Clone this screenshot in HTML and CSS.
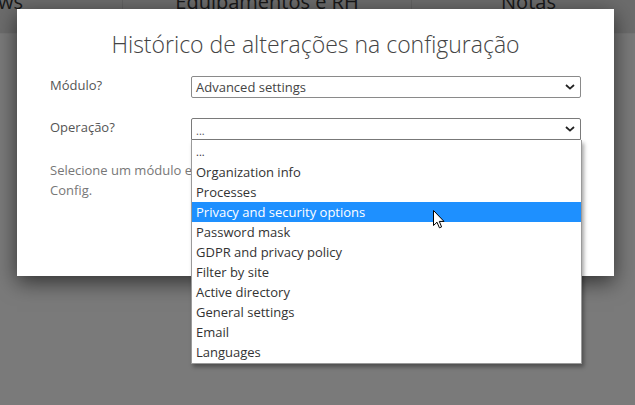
FILE: index.html
```html
<!DOCTYPE html>
<html lang="pt">
<head>
<meta charset="utf-8">
<link rel="stylesheet" href="styles.css">
</head>
<body>
<div class="page">
  <nav class="tabs">
    <div class="tab tab-first">Workflows</div>
    <div class="tab tab-mid">Equipamentos e RH</div>
    <div class="tab tab-last">Notas</div>
  </nav>
  <div class="page-body"></div>
</div>
<div class="backdrop"></div>
<div class="modal">
  <h1 class="title">Histórico de alterações na configuração</h1>
  <div class="row">
    <label class="label">Módulo?</label>
    <div class="select"><span>Advanced settings</span><svg class="chev" viewBox="0 0 10 6" width="10" height="6"><path d="M1 1 L5 4.6 L9 1" fill="none" stroke="#222" stroke-width="1.8"/></svg></div>
  </div>
  <div class="row">
    <label class="label">Operação?</label>
    <div class="select-wrap">
      <div class="select open"><span class="dots">...</span><svg class="chev" viewBox="0 0 10 6" width="10" height="6"><path d="M1 1 L5 4.6 L9 1" fill="none" stroke="#222" stroke-width="1.8"/></svg></div>
      <ul class="list">
        <li>...</li>
        <li>Organization info</li>
        <li>Processes</li>
        <li class="hl">Privacy and security options</li>
        <li>Password mask</li>
        <li>GDPR and privacy policy</li>
        <li>Filter by site</li>
        <li>Active directory</li>
        <li>General settings</li>
        <li>Email</li>
        <li>Languages</li>
      </ul>
      <svg class="cursor" viewBox="0 0 12 19" width="12" height="19"><path d="M0.5 0.5 L0.5 15.5 L4 12.2 L6.4 17.8 L8.6 16.9 L6.3 11.4 L11 11.4 Z" fill="#fff" stroke="#000" stroke-width="1" stroke-linejoin="round"/></svg>
    </div>
  </div>
  <p class="help"><span class="line">Selecione um módulo e uma operação para ver o histórico de alterações no</span><br>Config.</p>
</div>
</body>
</html>
```
FILE: styles.css
```css
html, body {
  margin: 0;
  padding: 0;
}
body {
  width: 635px;
  height: 405px;
  overflow: hidden;
  background: #ffffff;
  font-family: "Open Sans", "Noto Sans", sans-serif;
  position: relative;
}
.page {
  height: 405px;
}
.tabs {
  display: flex;
  height: 33px;
  background: #d8d8d8;
  border-bottom: 1px solid #ececec;
}
.tab {
  font-size: 20px;
  color: #333;
  line-height: 12px;
  text-align: center;
  overflow: hidden;
  white-space: nowrap;
  border-right: 1px solid #c4c4c4;
  margin-top: -4px;
}
.tab-first { width: 123px; text-align: right; padding-right: 99px; box-sizing: border-box; direction: rtl; }
.tab-mid { width: 288px; }
.tab-last { flex: 1; border-right: none; padding-left: 10px; }
.page-body {
  background: #f4f4f4;
  height: 371px;
}
.backdrop {
  position: absolute;
  inset: 0;
  background: rgba(0, 0, 0, 0.5);
}
.modal {
  position: absolute;
  left: 17px;
  top: 9px;
  width: 597px;
  height: 267px;
  box-sizing: border-box;
  background: #fff;
  box-shadow: 0 6px 20px rgba(0, 0, 0, 0.6);
  padding: 18px 33px 0 33px;
}
.title {
  margin: 0 0 15px 0;
  font-weight: 300;
  font-size: 23px;
  line-height: 34px;
  color: #444;
  text-align: center;
}
.row {
  display: flex;
  align-items: flex-start;
  margin-bottom: 20px;
}
.label {
  width: 141px;
  flex: none;
  font-size: 13px;
  color: #555;
  line-height: 20px;
  margin-top: -1px;
}
.select-wrap {
  flex: 1;
  position: relative;
}
.row > .select {
  flex: 1;
}
.select {
  height: 22px;
  box-sizing: border-box;
  border: 1px solid #8a8a8a;
  border-radius: 2px;
  display: flex;
  align-items: center;
  justify-content: space-between;
  padding: 0 5px 0 4px;
  font-size: 13px;
  color: #444;
  background: #fff;
}
.select.open {
  border-color: #7a7a7a;
  border-bottom-left-radius: 0;
  border-bottom-right-radius: 0;
}
.dots {
  font-size: 11px;
  color: #555;
  padding-top: 3px;
}
.chev {
  display: block;
}
.list {
  position: absolute;
  left: 0;
  top: 22px;
  width: 391px;
  margin: 0;
  padding: 2px 0 1px 0;
  list-style: none;
  background: #fff;
  border: 1px solid #9a9a9a;
  border-top: none;
  box-sizing: border-box;
  box-shadow: 2px 3px 4px rgba(0, 0, 0, 0.35);
  z-index: 2;
}
.list li {
  height: 20px;
  line-height: 20px;
  padding-left: 4px;
  font-size: 13px;
  color: #333;
  white-space: nowrap;
}
.list li:first-child {
  font-size: 11px;
}
.list li.hl {
  background: #1e90ff;
  color: #fff;
}
.cursor {
  position: absolute;
  left: 242px;
  top: 92px;
  z-index: 3;
}
.help {
  margin: 3px 0 0 0;
  font-size: 13px;
  line-height: 20px;
  color: #777;
}
.help .line {
  white-space: nowrap;
}
```
